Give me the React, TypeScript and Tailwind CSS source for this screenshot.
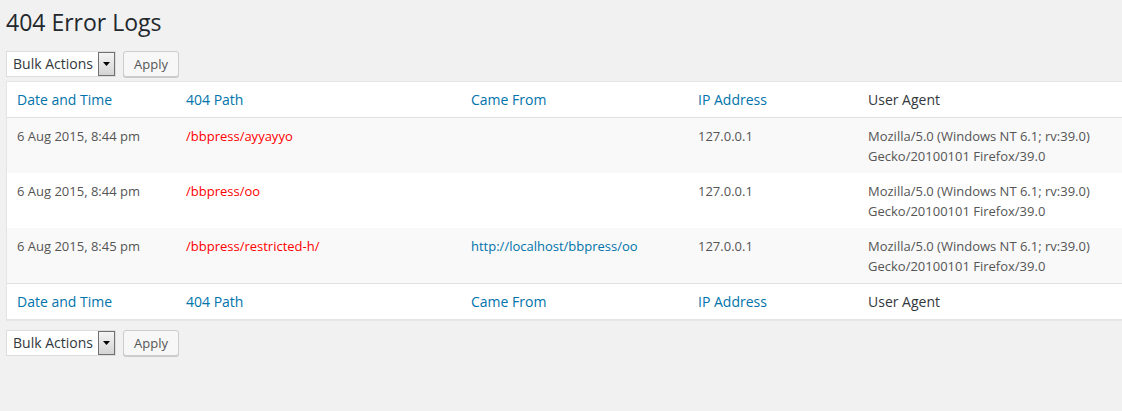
import React from "react";

const rows = [
  {
    date: "6 Aug 2015, 8:44 pm",
    path: "/bbpress/ayyayyo",
    from: "",
    ip: "127.0.0.1",
  },
  {
    date: "6 Aug 2015, 8:44 pm",
    path: "/bbpress/oo",
    from: "",
    ip: "127.0.0.1",
  },
  {
    date: "6 Aug 2015, 8:45 pm",
    path: "/bbpress/restricted-h/",
    from: "http://localhost/bbpress/oo",
    ip: "127.0.0.1",
  },
];

const cols = "grid grid-cols-[169px_285px_227px_170px_1fr]";

function BulkActions() {
  return (
    <div className="flex items-center gap-[7px]">
      <div className="flex h-[26px] w-[110px] items-stretch border border-[#dddddd] bg-white">
        <span className="flex-1 pl-[6px] text-[14px] leading-[24px] text-[#32373c]">
          Bulk Actions
        </span>
        <span className="flex w-[17px] items-center justify-center border border-[#707070] bg-gradient-to-b from-[#f4f4f4] to-[#d4d4d4]">
          <svg width="7" height="4" viewBox="0 0 7 4">
            <path d="M0 0h7L3.5 4z" fill="#000" />
          </svg>
        </span>
      </div>
      <button className="h-[26px] w-[56px] rounded-[3px] border border-[#cccccc] bg-[#f7f7f7] text-[13px] leading-[24px] text-[#555555] shadow-[0_1px_0_#cccccc]">
        Apply
      </button>
    </div>
  );
}

function HeadRow({ top }: { top?: boolean }) {
  return (
    <div
      className={`${cols} h-[36px] items-center bg-white text-[14px] ${
        top ? "border-b" : "border-t"
      } border-[#e1e1e1]`}
    >
      <span className="px-[10px] text-[#0073aa]">Date and Time</span>
      <span className="px-[10px] text-[#0073aa]">404 Path</span>
      <span className="px-[10px] text-[#0073aa]">Came From</span>
      <span className="px-[10px] text-[#0073aa]">IP Address</span>
      <span className="px-[10px] text-[#32373c]">User Agent</span>
    </div>
  );
}

export default function App() {
  return (
    <div className="min-h-[411px] overflow-hidden bg-[#f1f1f1] pl-[6px] font-['Open_Sans',sans-serif]">
      <h1 className="pt-[8px] pb-[4px] text-[23px] leading-[29px] text-[#23282d]">
        404 Error Logs
      </h1>
      <div className="mt-[10px]">
        <BulkActions />
      </div>
      <div className="mt-[4px] border-y border-l border-[#e5e5e5] shadow-[0_1px_1px_rgba(0,0,0,0.04)]">
        <HeadRow top />
        {rows.map((r, i) => (
          <div
            key={i}
            className={`${cols} h-[55px] py-[8px] text-[13px] leading-[20px] text-[#555555] ${
              i % 2 === 0 ? "bg-[#f9f9f9]" : "bg-white"
            }`}
          >
            <span className="px-[10px]">{r.date}</span>
            <span className="px-[10px] text-[#ff0000]">{r.path}</span>
            <span className="px-[10px] text-[#0073aa]">{r.from}</span>
            <span className="px-[10px]">{r.ip}</span>
            <span className="px-[10px]">
              Mozilla/5.0 (Windows NT 6.1; rv:39.0)
              <br />
              Gecko/20100101 Firefox/39.0
            </span>
          </div>
        ))}
        <HeadRow />
      </div>
      <div className="mt-[10px]">
        <BulkActions />
      </div>
    </div>
  );
}
